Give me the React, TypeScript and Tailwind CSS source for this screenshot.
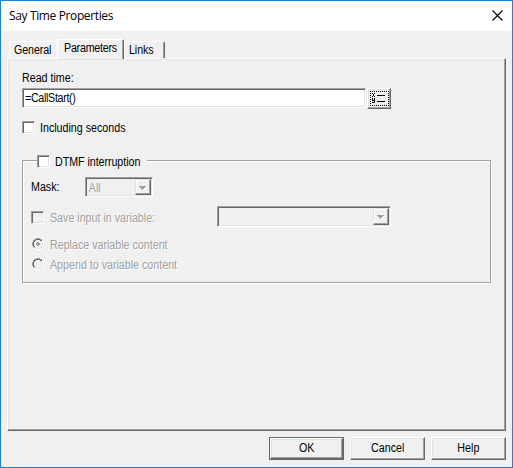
import { clsx } from "clsx";
import type { ReactNode } from "react";

const raised =
  "border border-t-white border-l-white border-r-[#696969] border-b-[#696969] shadow-[inset_-1px_-1px_#a0a0a0,inset_1px_1px_#e3e3e3]";
const sunken =
  "border border-t-[#a0a0a0] border-l-[#a0a0a0] border-r-white border-b-white shadow-[inset_1px_1px_#696969,inset_-1px_-1px_#e3e3e3]";
const disabledText = "text-[#a0a0a0] [text-shadow:1px_1px_#fff]";

function Text({ children, className, center }: { children: ReactNode; className?: string; center?: boolean }) {
  return (
    <span
      className={clsx(
        "block scale-x-[0.89] whitespace-nowrap leading-[14px]",
        center ? "origin-center" : "origin-left",
        className
      )}
    >
      {children}
    </span>
  );
}

function Checkbox({ disabled }: { disabled?: boolean }) {
  return <span className={clsx("block size-[13px] shrink-0", sunken, disabled ? "bg-[#f0f0f0]" : "bg-white")} />;
}

function Radio({ checked }: { checked?: boolean }) {
  return (
    <svg width="12" height="12" viewBox="0 0 12 12" shapeRendering="crispEdges" className="block shrink-0">
      <path d="M4 0h4v1H4zM2 1h2v1H2zM8 1h2v1H8zM1 2h1v2H1zM0 4h1v4H0zM1 8h1v2H1z" fill="#a0a0a0" />
      <path d="M4 1h4v1H4zM2 2h2v1H2zM8 2h2v1H8zM2 3h1v1H2zM1 4h1v4H1zM2 8h1v1H2z" fill="#696969" />
      <path d="M10 2h1v2h-1zM11 4h1v4h-1zM10 8h1v2h-1zM8 10h2v1H8zM4 11h4v1H4zM2 10h2v1H2z" fill="#fff" />
      <path d="M9 3h1v1H9zM10 4h1v4h-1zM9 8h1v1H9zM8 9h2v1H8zM4 10h4v1H4zM2 9h2v1H2z" fill="#e3e3e3" />
      {checked && <path d="M5 4h2v1h1v2H7v1H5V7H4V5h1z" fill="#a0a0a0" />}
    </svg>
  );
}

function Combo({ value, className }: { value?: string; className?: string }) {
  return (
    <div className={clsx("flex items-stretch justify-between p-px", sunken, className)}>
      <Text className="self-center pt-px pl-[2px] text-[#a0a0a0]">{value}</Text>
      <span className="flex w-4 items-start justify-center border border-t-[#e3e3e3] border-l-[#e3e3e3] border-r-[#696969] border-b-[#696969] pt-[6px] shadow-[inset_-1px_-1px_#a0a0a0,inset_1px_1px_#fff]">
        <svg width="8" height="5" viewBox="0 0 8 5" shapeRendering="crispEdges" className="block">
          <path d="M1 1h7v1H7v1H6v1H5v1H4V4H3V3H2V2H1z" fill="#fff" />
          <path d="M0 0h7v1H6v1H5v1H4v1H3V3H2V2H1V1H0z" fill="#a0a0a0" />
        </svg>
      </span>
    </div>
  );
}

function Tab({ label, active, className }: { label: string; active?: boolean; className?: string }) {
  return (
    <div
      className={clsx(
        "rounded-t-[2px] border border-b-0 border-t-white border-l-white border-r-[#696969] bg-[#f0f0f0] pt-px",
        active ? "relative z-10 h-[20px]" : "h-[17px]",
        className
      )}
    >
      <Text>{label}</Text>
    </div>
  );
}

function VariableIcon() {
  return (
    <svg width="19" height="15" viewBox="0 0 19 15" shapeRendering="crispEdges" className="block">
      <path d="M0 .5h19M0 14.5h19" stroke="#000" strokeDasharray="1 1" />
      <path d="M.5 0v15M18.5 0v15" stroke="#000" strokeDasharray="1 1" />
      <path
        d="M2 2h1v1H2zM4 2h1v1H4zM3 3h1v2H3zM2 5h1v1H2zM4 5h1v1H4zM2 7h1v3H2zM4 7h1v5H4zM3 9h1v1H3zM2 11h2v1H2zM7 4h8v1H7zM7 10h8v1H7z"
        fill="#000"
      />
    </svg>
  );
}

function DialogButton({ label, primary }: { label: string; primary?: boolean }) {
  return (
    <button className={clsx("flex h-[23px] w-[75px]", primary && "border border-[#696969]")}>
      <span className={clsx("flex h-full w-full items-center justify-center pb-px", raised)}>
        <Text center>{label}</Text>
      </span>
    </button>
  );
}

export default function App() {
  return (
    <div className="h-[468px] w-[513px] overflow-hidden border border-[#1883d7] bg-[#f0f0f0] font-['Liberation_Sans',Arial,sans-serif] text-[12px] text-black">
      <header className="flex h-[30px] items-center justify-between bg-white pr-[9px] pl-2">
        <span className="font-['Open_Sans','Noto_Sans',sans-serif] text-[12px] leading-4 tracking-[-0.37px] whitespace-nowrap">
          Say Time Properties
        </span>
        <svg width="11" height="11" viewBox="0 0 11 11" className="mb-px block">
          <path d="M.5.5l10 10M10.5.5l-10 10" stroke="#000" strokeWidth="1.1" />
        </svg>
      </header>

      <nav className="flex h-[27px] items-end pl-2">
        <Tab label="General" className="w-[48px] border-r-0 pl-[4px] tracking-[-0.1px]" />
        <Tab
          label="Parameters"
          active
          className="-mb-px w-[67px] pl-[6px] tracking-[-0.25px] shadow-[inset_-1px_0_#a0a0a0]"
        />
        <Tab label="Links" className="w-[41px] pl-[4px] tracking-[-0.1px] shadow-[inset_-1px_0_#a0a0a0]" />
      </nav>

      <main className={clsx("ml-[6px] h-[373px] w-[499px] pt-[12px] pl-[14px]", raised)}>
        <Text>Read time:</Text>
        <div className="mt-[3px] flex gap-px">
          <div className={clsx("flex h-[20px] w-[344px] items-center bg-white pl-[2px]", sunken)}>
            <Text className="tracking-[-0.35px]">=CallStart()</Text>
          </div>
          <button className={clsx("flex h-[21px] w-[24px] pt-[2px] pl-[2px]", raised)}>
            <VariableIcon />
          </button>
        </div>

        <label className="mt-[12px] flex h-[13px] items-center gap-[5px]">
          <Checkbox />
          <Text>Including seconds</Text>
        </label>

        <section className="mt-[26px] h-[123px] w-[469px] border border-[#a0a0a0] pl-[8px] shadow-[1px_1px_#fff,inset_1px_1px_#fff]">
          <label className="-mt-[6px] ml-[6px] flex h-[13px] w-[110px] items-center gap-[5px] bg-[#f0f0f0]">
            <Checkbox />
            <Text className="tracking-[-0.05px]">DTMF interruption</Text>
          </label>
          <div className="mt-[9px] flex items-center">
            <Text className="w-[54px]">Mask:</Text>
            <Combo value="All" className="h-[20px] w-[68px]" />
          </div>
          <div className="mt-[9px] flex h-[21px] items-start">
            <div className="mt-[5px] flex h-[13px] w-[186px] items-center gap-[6px]">
              <Checkbox disabled />
              <Text className={clsx("pt-px", disabledText)}>Save input in variable:</Text>
            </div>
            <Combo className="h-[21px] w-[174px]" />
          </div>
          <label className="mt-[11px] ml-px flex h-[12px] items-center gap-[6px]">
            <Radio checked />
            <Text className={clsx("pt-[2px]", disabledText)}>Replace variable content</Text>
          </label>
          <label className="mt-[8px] ml-px flex h-[12px] items-center gap-[6px]">
            <Radio />
            <Text className={clsx("pt-[2px]", disabledText)}>Append to variable content</Text>
          </label>
        </section>
      </main>

      <footer className="mt-[6px] mr-[6px] flex justify-end gap-[6px]">
        <DialogButton label="OK" primary />
        <DialogButton label="Cancel" />
        <DialogButton label="Help" />
      </footer>
    </div>
  );
}
